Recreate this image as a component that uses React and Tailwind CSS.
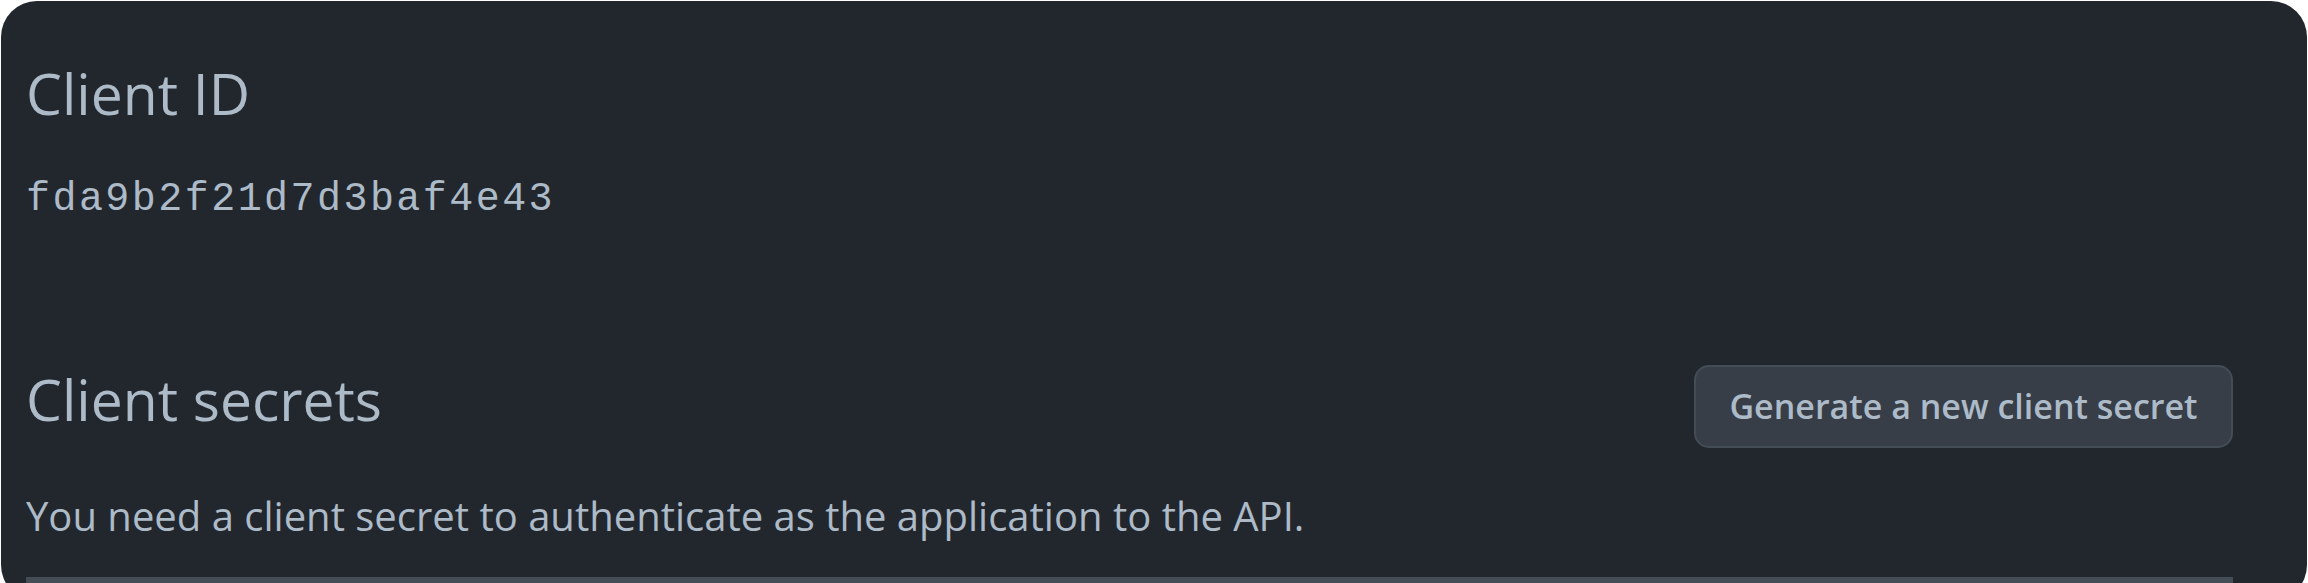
export default function App() {
  return (
    <div className="w-[2308px] h-[583px] bg-white pt-[1px] px-[1px] overflow-hidden">
      <div
        className="h-[600px] bg-[#22272e] rounded-[36px] pl-[25px] pr-[74px] pt-[57px] text-[#adbac7]"
        style={{ fontFamily: '"Open Sans", "Noto Sans", sans-serif' }}
      >
        <h2 className="text-[57px] leading-[70px] font-normal">Client ID</h2>
        <div
          className="mt-[47px] text-[40px] leading-[50px] tracking-[2.45px]"
          style={{ fontFamily: '"Liberation Mono", "DejaVu Sans Mono", monospace' }}
        >
          fda9b2f21d7d3baf4e43
        </div>
        <div className="mt-[139px] flex items-start justify-between">
          <h2 className="text-[57px] leading-[70px] font-normal">Client secrets</h2>
          <button className="mt-[1px] h-[83px] w-[539px] rounded-[15px] border-2 border-[#444c56] bg-[#373e47] text-[34px] font-semibold text-[#adbac7] flex items-center justify-center">
            Generate a new client secret
          </button>
        </div>
        <p className="mt-[43px] text-[40px] leading-[50px]">
          You need a client secret to authenticate as the application to the API.
        </p>
        <div className="mt-[36px] h-[12px] bg-[#444c56]" />
      </div>
    </div>
  );
}
